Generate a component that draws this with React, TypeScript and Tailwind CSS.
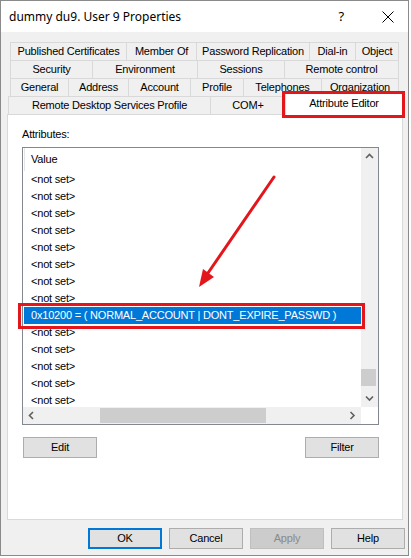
import React from "react";

type Tab = { t: string; w: string; last?: boolean };

const row1: Tab[] = [
  { t: "Published Certificates", w: "w-[116px]" },
  { t: "Member Of", w: "w-[70px]" },
  { t: "Password Replication", w: "w-[113px]" },
  { t: "Dial-in", w: "w-[46px]" },
  { t: "Object", w: "w-[44px]", last: true },
];
const row2: Tab[] = [
  { t: "Security", w: "w-[82px]" },
  { t: "Environment", w: "w-[105px]" },
  { t: "Sessions", w: "w-[87px]" },
  { t: "Remote control", w: "w-[115px]", last: true },
];
const row3: Tab[] = [
  { t: "General", w: "w-[58px]" },
  { t: "Address", w: "w-[60px]" },
  { t: "Account", w: "w-[62px]" },
  { t: "Profile", w: "w-[53px]" },
  { t: "Telephones", w: "w-[78px]" },
  { t: "Organization", w: "w-[78px]", last: true },
];

function TabCell({ tab }: { tab: Tab }) {
  return (
    <div
      className={`${tab.w} h-[18px] shrink-0 flex items-center justify-center border-l border-t border-[#d9d9d9] ${
        tab.last ? "border-r" : ""
      }`}
    >
      {tab.t}
    </div>
  );
}

function Chevron({ dir }: { dir: "up" | "down" | "left" | "right" }) {
  const vert = dir === "up" || dir === "down";
  const pts =
    dir === "up"
      ? "1,5 4.5,1.5 8,5"
      : dir === "down"
      ? "1,1.5 4.5,5 8,1.5"
      : dir === "left"
      ? "5,1 1.5,4.5 5,8"
      : "1.5,1 5,4.5 1.5,8";
  return (
    <svg width={vert ? 9 : 7} height={vert ? 7 : 9} viewBox={vert ? "0 0 9 7" : "0 0 7 9"}>
      <polyline points={pts} fill="none" stroke="#606060" strokeWidth="1.6" />
    </svg>
  );
}

function Btn({ label, kind }: { label: string; kind?: "default" | "disabled" }) {
  const cls =
    kind === "default"
      ? "border-2 border-[#0078d7] bg-[#e1e1e1] text-black"
      : kind === "disabled"
      ? "border border-[#bfbfbf] bg-[#cccccc] text-[#8a8a8a]"
      : "border border-[#adadad] bg-[#e1e1e1] text-black";
  return (
    <div className={`w-[74px] h-[21px] shrink-0 flex items-center justify-center ${cls}`}>{label}</div>
  );
}

export default function App() {
  const before = 8;
  const after = 5;
  return (
    <div className="relative w-[411px] h-[558px] bg-white font-['Liberation_Sans',Arial,sans-serif] text-[11px] tracking-[-0.2px] text-black">
      <div className="w-[409px] h-[556px] border border-[#8a8a8a] bg-[#f0f0f0] flex flex-col">
        {/* title bar */}
        <div className="h-[31px] bg-white flex items-center pl-[8px] pr-[14px] shrink-0">
          <div className="font-['Noto_Sans',sans-serif] text-[12px] tracking-normal leading-none flex-1 pt-[1px]">
            dummy du9. User 9 Properties
          </div>
          <div className="font-['Noto_Sans',sans-serif] text-[13px] leading-none mr-[38px]">?</div>
          <svg width="12" height="12" viewBox="0 0 12 12">
            <path d="M0.5 0.5 L11.5 11.5 M11.5 0.5 L0.5 11.5" stroke="#000" strokeWidth="1" />
          </svg>
        </div>

        {/* tabs */}
        <div className="mt-[10px] flex flex-col">
          <div className="flex ml-[9px]">
            {row1.map((t) => (
              <TabCell key={t.t} tab={t} />
            ))}
          </div>
          <div className="flex ml-[9px]">
            {row2.map((t) => (
              <TabCell key={t.t} tab={t} />
            ))}
          </div>
          <div className="flex ml-[9px]">
            {row3.map((t) => (
              <TabCell key={t.t} tab={t} />
            ))}
          </div>
          <div className="flex items-end h-[18px] ml-[7px]">
            <div className="w-[202px] h-[18px] flex items-center justify-center border-l border-t border-[#d9d9d9]">
              Remote Desktop Services Profile
            </div>
            <div className="w-[75px] h-[18px] flex items-center justify-center border-l border-t border-[#d9d9d9]">
              COM+
            </div>
            <div className="relative z-10 w-[118px] h-[22px] -mb-px bg-white flex items-center justify-center border-l border-t border-r border-[#d9d9d9] pb-[2px]">
              Attribute Editor
            </div>
          </div>
        </div>

        {/* panel */}
        <div className="ml-[6px] w-[396px] h-[406px] border border-[#d9d9d9] bg-white flex flex-col px-[14px] pt-[13px] shrink-0">
          <div className="leading-[13px]">Attributes:</div>
          <div className="mt-[6px] w-[357px] h-[278px] border border-[#828790] flex flex-col">
            <div className="flex h-[259px]">
              <div className="w-[338px] h-[259px] overflow-hidden flex flex-col">
                <div className="h-[23px] shrink-0 flex items-stretch">
                  <div className="ml-[1px] w-px bg-[#e5e5e5]" />
                  <div className="pl-[6px] flex items-center">Value</div>
                </div>
                {Array.from({ length: before }).map((_, i) => (
                  <div key={"a" + i} className="h-[17px] shrink-0 flex items-center pl-[8px]">
                    {"<not set>"}
                  </div>
                ))}
                <div className="h-[17px] shrink-0 ml-px flex items-center pl-[7px] bg-[#0078d7] text-white whitespace-nowrap">
                  0x10200 = ( NORMAL_ACCOUNT | DONT_EXPIRE_PASSWD )
                </div>
                {Array.from({ length: after }).map((_, i) => (
                  <div key={"b" + i} className="h-[17px] shrink-0 flex items-center pl-[8px]">
                    {"<not set>"}
                  </div>
                ))}
              </div>
              <div className="w-[17px] h-[259px] bg-[#f0f0f0] flex flex-col">
                <div className="h-[17px] flex items-center justify-center">
                  <Chevron dir="up" />
                </div>
                <div className="flex-1 flex flex-col justify-end pb-[4px]">
                  <div className="w-[15px] h-[17px] bg-[#cdcdcd]" />
                </div>
                <div className="h-[17px] flex items-center justify-center">
                  <Chevron dir="down" />
                </div>
              </div>
            </div>
            <div className="flex h-[17px]">
              <div className="w-[338px] h-[17px] bg-[#f0f0f0] flex">
                <div className="w-[17px] flex items-center justify-center">
                  <Chevron dir="left" />
                </div>
                <div className="flex-1 flex items-center pl-[60px]">
                  <div className="w-[166px] h-[15px] bg-[#cdcdcd]" />
                </div>
                <div className="w-[17px] flex items-center justify-center">
                  <Chevron dir="right" />
                </div>
              </div>
              <div className="w-[17px] h-[17px] bg-white" />
            </div>
          </div>
          <div className="mt-[12px] w-[357px] flex justify-between">
            <div className="ml-px">
              <Btn label="Edit" />
            </div>
            <Btn label="Filter" />
          </div>
        </div>

        {/* bottom buttons */}
        <div className="mt-[8px] flex justify-end gap-[7px] pr-[3px]">
          <Btn label="OK" kind="default" />
          <Btn label="Cancel" />
          <Btn label="Apply" kind="disabled" />
          <Btn label="Help" />
        </div>
      </div>

      {/* annotations */}
      <div className="absolute left-[282px] top-[91px] w-[123px] h-[27px] border-[3px] border-[#e3161c] z-20 pointer-events-none" />
      <div className="absolute left-[18px] top-[303px] w-[347px] h-[26px] border-[3px] border-[#e3161c] z-20 pointer-events-none" />
      <svg className="absolute left-0 top-0 z-20 pointer-events-none" width="411" height="558" viewBox="0 0 411 558">
        <line x1="274" y1="177" x2="208" y2="273" stroke="#e3161c" strokeWidth="3" strokeLinecap="round" />
        <polygon points="199,287 214,277 203,269" fill="#e3161c" />
      </svg>
    </div>
  );
}
